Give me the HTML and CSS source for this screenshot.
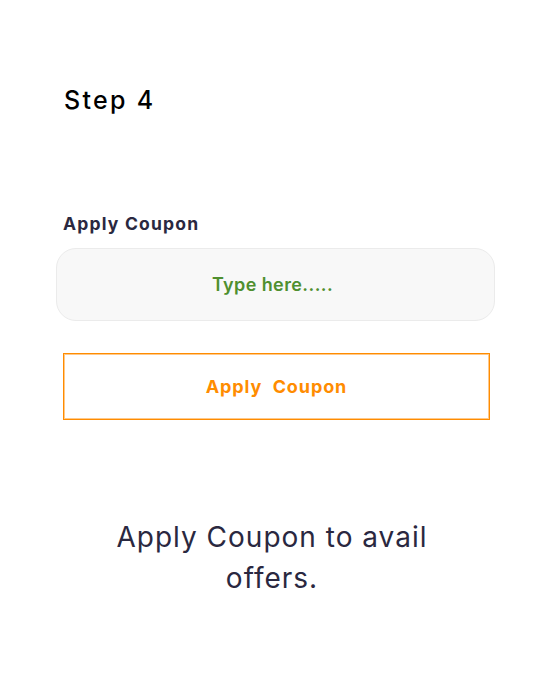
FILE: index.html
```html
<!DOCTYPE html>
<html>
<head>
<meta charset="utf-8">
<link rel="stylesheet" href="styles.css">
</head>
<body>
<main class="page">
  <h1 class="step">Step 4</h1>
  <section class="coupon">
    <label class="label" for="code">Apply Coupon</label>
    <div class="field"><span class="placeholder">Type here.....</span></div>
    <div class="apply">Apply&nbsp; Coupon</div>
  </section>
  <p class="note">Apply Coupon to avail offers.</p>
</main>
</body>
</html>
```
FILE: styles.css
```css
* { box-sizing: border-box; }
html, body { margin: 0; padding: 0; background: #fff; }
body { font-family: Inter, "Open Sans", sans-serif; }
.page { width: 545px; height: 686px; padding-top: 82px; }
.step {
  margin: 0 0 0 64px;
  font-size: 25px;
  line-height: 36px;
  font-weight: 500;
  letter-spacing: 2.3px;
  color: #000;
}
.coupon { margin-top: 93px; display: flex; flex-direction: column; }
.label {
  margin-left: 63px;
  font-size: 17.5px;
  line-height: 26px;
  font-weight: 700;
  letter-spacing: 1.2px;
  color: #2a2840;
}
.field {
  margin: 11px 0 0 56px;
  width: 439px;
  height: 73px;
  border: 1px solid #ebebeb;
  background: #f8f8f8;
  border-radius: 20px;
  display: flex;
  align-items: center;
  justify-content: center;
}
.placeholder {
  font-size: 18px;
  font-weight: 600;
  letter-spacing: 0.4px;
  color: #4f8f2f;
  padding-right: 6px;
}
.apply {
  margin: 32px 0 0 63px;
  width: 427px;
  height: 67px;
  border: 1px solid #ff8c00;
  box-shadow: inset 0 0 0 1px #ffc98a;
  background: #fff;
  display: flex;
  align-items: center;
  justify-content: center;
  white-space: pre;
  font-size: 18px;
  font-weight: 700;
  letter-spacing: 0.9px;
  color: #ff8c00;
  cursor: pointer;
}
.note {
  margin: 97px auto 0;
  width: 340px;
  padding-right: 1px;
  text-align: center;
  font-size: 28px;
  line-height: 41px;
  font-weight: 400;
  letter-spacing: 1px;
  color: #2a2840;
}
```
